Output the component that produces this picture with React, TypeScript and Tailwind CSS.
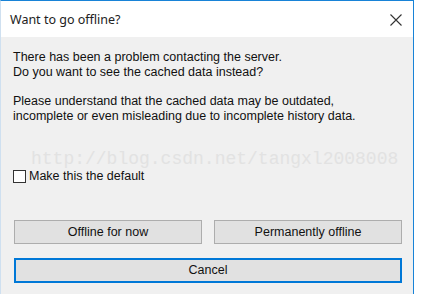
import React from 'react';

const btn =
  "h-[24px] bg-[#e1e1e1] border border-[#adadad] text-[12.5px] text-[#111] flex items-center justify-center";

export default function App() {
  return (
    <div className="w-[423px] h-[294px] bg-white overflow-hidden" style={{ fontFamily: '"Liberation Sans", Arial, sans-serif' }}>
      <div className="w-[414px] h-[294px] border-t border-r border-[#1883d7] border-l border-l-[#cfe0f0] flex flex-col">
        {/* title bar */}
        <div className="h-[36px] bg-white flex items-center justify-between pl-[9px] pr-[11px]">
          <span className="text-[12.5px] text-[#222] mt-[2px]" style={{ fontFamily: '"Noto Sans", sans-serif' }}>
            Want to go offline?
          </span>
          <svg width="12" height="12" viewBox="0 0 12 12" className="text-[#333] mt-[1px]">
            <path d="M0.5 0.5 L11.5 11.5 M11.5 0.5 L0.5 11.5" stroke="currentColor" strokeWidth="1.1" fill="none" />
          </svg>
        </div>

        {/* body */}
        <div className="flex-1 bg-[#f0f0f0] pl-[12px] pr-[11px] pt-[13px] text-[12.5px] text-[#111] leading-[15px] relative">
          <p>There has been a problem contacting the server.</p>
          <p>Do you want to see the cached data instead?</p>
          <p className="mt-[14px]">Please understand that the cached data may be outdated,</p>
          <p>incomplete or even misleading due to incomplete history data.</p>

          <div
            className="absolute left-[30px] top-[115px] text-[18px] text-[#e2e2e2] pointer-events-none"
            style={{ fontFamily: '"Liberation Mono", monospace' }}
          >
            http://blog.csdn.net/tangxl2008008
          </div>

          <label className="mt-[45px] flex items-center gap-[3px] h-[15px]">
            <span className="w-[13px] h-[13px] border border-[#333] bg-white" />
            <span>Make this the default</span>
          </label>

          <div className="mt-[36px] pl-[1px] grid grid-cols-2 gap-[12px] w-[389px]">
            <div className={btn}>Offline for now</div>
            <div className={btn}>Permanently offline</div>
          </div>
          <div className="mt-[14px] ml-[1px] w-[388px] h-[25px] bg-[#e1e1e1] border-2 border-[#0078d7] text-[12.5px] flex items-center justify-center">
            Cancel
          </div>
        </div>
      </div>
    </div>
  );
}
